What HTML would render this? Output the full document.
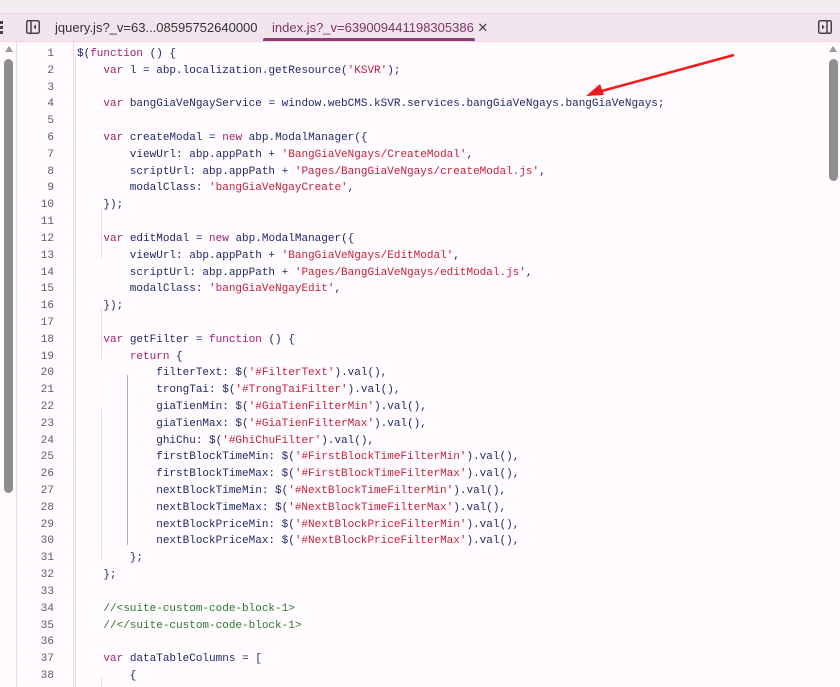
<!DOCTYPE html>
<html><head><meta charset="utf-8">
<style>
html,body{margin:0;padding:0;width:840px;height:687px;overflow:hidden;background:#fffbfe;font-family:"Liberation Sans",sans-serif;}
#top{position:absolute;left:0;top:0;width:840px;height:13px;background:#f3edf2;border-bottom:1px solid #f4d6e4;}
#tabs{position:absolute;left:0;top:14px;width:840px;height:27px;background:#f3e5ee;border-bottom:1px solid #f4d2e2;}
.tab{position:absolute;top:6px;font-size:13px;color:#333;white-space:nowrap;}
#act{color:#7a3468;}
#ul{position:absolute;left:263px;top:24px;width:212px;height:3px;background:#8c3d76;border-radius:2px 2px 0 0;}
#code{position:absolute;left:0;top:42px;width:840px;height:645px;}
.ln{position:absolute;left:0;width:54px;text-align:right;font-family:"Liberation Mono",monospace;font-size:11px;color:#5a5a6a;}
.cl{position:absolute;left:77px;font-family:"Liberation Mono",monospace;font-size:11px;color:#1f2a66;white-space:pre;}
.k{color:#a0226e}.s{color:#c4213c}.c{color:#2a7a2a}
.vl{position:absolute;width:1px;background:#f7d3e6;}
</style></head><body>
<div id="top"></div>
<div id="tabs">
 <div style="position:absolute;left:0;top:7px;width:4px;">
  <div style="width:3px;height:3px;background:#444;margin-bottom:2px"></div><div style="width:3px;height:3px;background:#444;margin-bottom:2px"></div><div style="width:3px;height:3px;background:#444"></div></div>
 <svg style="position:absolute;left:26px;top:6px" width="14" height="14" viewBox="0 0 14 14"><rect x="0.75" y="0.75" width="12.5" height="12.5" rx="1.5" fill="none" stroke="#444" stroke-width="1.5"/><line x1="5" y1="1" x2="5" y2="13" stroke="#444" stroke-width="1.5"/><path d="M10 4.5 L7.3 7 L10 9.5Z" fill="#444"/></svg>
 <div class="tab" style="left:55px">jquery.js?_v=63...08595752640000</div>
 <div class="tab" id="act" style="left:272px">index.js?_v=639009441198305386 <span style="color:#444">✕</span></div>
 <div id="ul"></div>
 <svg style="position:absolute;left:818px;top:6px" width="14" height="14" viewBox="0 0 14 14"><rect x="0.75" y="0.75" width="12.5" height="12.5" rx="1.5" fill="none" stroke="#444" stroke-width="1.5"/><line x1="9" y1="1" x2="9" y2="13" stroke="#444" stroke-width="1.5"/><path d="M4 4.5 L6.7 7 L4 9.5Z" fill="#444"/></svg>
</div>
<div id="code">
 <div style="position:absolute;left:16px;top:0;width:1px;height:645px;background:#f7d3e6"></div>
 <div style="position:absolute;left:73px;top:0;width:1px;height:645px;background:#f7d3e6"></div>
 <svg style="position:absolute;left:4px;top:3px" width="10" height="8"><path d="M1 7 L5 1 L9 7Z" fill="#999"/></svg>
 <div style="position:absolute;left:4px;top:17px;width:9px;height:434px;background:#8e8e8e;border-radius:5px"></div>
 <svg style="position:absolute;left:828px;top:3px" width="10" height="8"><path d="M1 7 L5 1 L9 7Z" fill="#999"/></svg>
 <div style="position:absolute;left:829px;top:17px;width:9px;height:122px;background:#8e8e8e;border-radius:5px"></div>
 <div class="vl" style="left:75px;top:14px;height:631px"></div>
 <div class="vl" style="left:101px;top:165px;height:51px"></div>
 <div class="vl" style="left:101px;top:266px;height:51px"></div>
 <div class="vl" style="left:101px;top:367px;height:152px"></div>
 <div class="vl" style="left:127px;top:333px;height:170px;background:#c9a2c0"></div>
 <div class="vl" style="left:101px;top:635px;height:10px"></div>
 <div id="lines"></div>
 <svg style="position:absolute;left:580px;top:8px" width="160" height="50"><line x1="154" y1="5" x2="18" y2="42" stroke="#f21b1b" stroke-width="2.5"/><path d="M6 46 L20 34 L24 45Z" fill="#f21b1b"/></svg>
</div>
<script>
var L=[
'$(<span class="k">function</span> () {',
'    <span class="k">var</span> l = abp.localization.getResource(<span class="s">\'KSVR\'</span>);',
'',
'    <span class="k">var</span> bangGiaVeNgayService = window.webCMS.kSVR.services.bangGiaVeNgays.bangGiaVeNgays;',
'',
'    <span class="k">var</span> createModal = <span class="k">new</span> abp.ModalManager({',
'        viewUrl: abp.appPath + <span class="s">\'BangGiaVeNgays/CreateModal\'</span>,',
'        scriptUrl: abp.appPath + <span class="s">\'Pages/BangGiaVeNgays/createModal.js\'</span>,',
'        modalClass: <span class="s">\'bangGiaVeNgayCreate\'</span>,',
'    });',
'',
'    <span class="k">var</span> editModal = <span class="k">new</span> abp.ModalManager({',
'        viewUrl: abp.appPath + <span class="s">\'BangGiaVeNgays/EditModal\'</span>,',
'        scriptUrl: abp.appPath + <span class="s">\'Pages/BangGiaVeNgays/editModal.js\'</span>,',
'        modalClass: <span class="s">\'bangGiaVeNgayEdit\'</span>,',
'    });',
'',
'    <span class="k">var</span> getFilter = <span class="k">function</span> () {',
'        <span class="k">return</span> {',
'            filterText: $(<span class="s">\'#FilterText\'</span>).val(),',
'            trongTai: $(<span class="s">\'#TrongTaiFilter\'</span>).val(),',
'            giaTienMin: $(<span class="s">\'#GiaTienFilterMin\'</span>).val(),',
'            giaTienMax: $(<span class="s">\'#GiaTienFilterMax\'</span>).val(),',
'            ghiChu: $(<span class="s">\'#GhiChuFilter\'</span>).val(),',
'            firstBlockTimeMin: $(<span class="s">\'#FirstBlockTimeFilterMin\'</span>).val(),',
'            firstBlockTimeMax: $(<span class="s">\'#FirstBlockTimeFilterMax\'</span>).val(),',
'            nextBlockTimeMin: $(<span class="s">\'#NextBlockTimeFilterMin\'</span>).val(),',
'            nextBlockTimeMax: $(<span class="s">\'#NextBlockTimeFilterMax\'</span>).val(),',
'            nextBlockPriceMin: $(<span class="s">\'#NextBlockPriceFilterMin\'</span>).val(),',
'            nextBlockPriceMax: $(<span class="s">\'#NextBlockPriceFilterMax\'</span>).val(),',
'        };',
'    };',
'',
'    <span class="c">//&lt;suite-custom-code-block-1&gt;</span>',
'    <span class="c">//&lt;/suite-custom-code-block-1&gt;</span>',
'',
'    <span class="k">var</span> dataTableColumns = [',
'        {'
];
var h='';
for(var i=0;i<L.length;i++){var t=6+i*16.81;
h+='<div class="ln" style="top:'+t+'px">'+(i+1)+'</div><div class="cl" style="top:'+t+'px">'+L[i]+'</div>';}
document.getElementById('lines').innerHTML=h;
</script>
</body></html>
